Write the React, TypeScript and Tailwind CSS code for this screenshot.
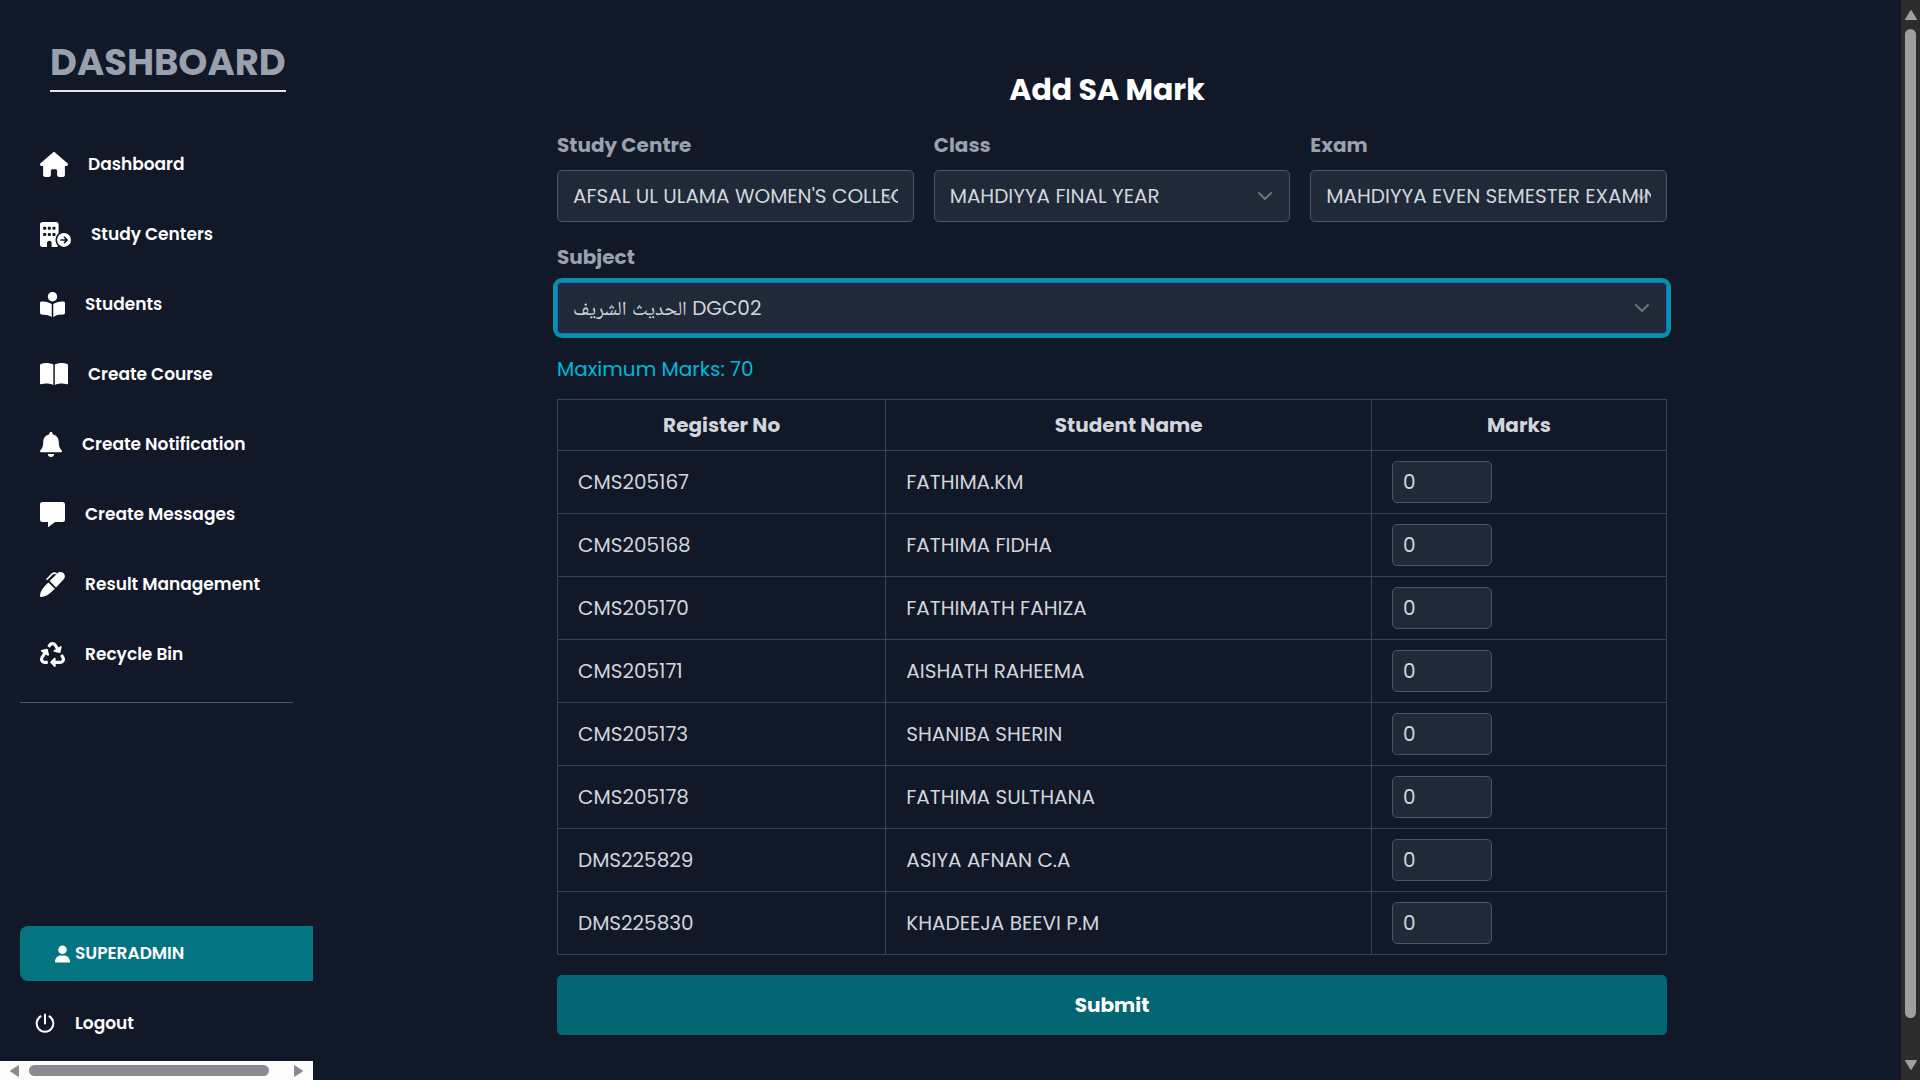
import React, { useState } from "react";
import {
  FaHouse,
  FaBuildingCircleArrowRight,
  FaBookOpenReader,
  FaUser,
} from "react-icons/fa6";
import { FaRecycle } from "react-icons/fa";

const navItems = [
  { label: "Dashboard", icon: <FaHouse className="h-[25px] w-7" /> },
  { label: "Study Centers", icon: <FaBuildingCircleArrowRight className="h-[25px] w-[31px]" /> },
  { label: "Students", icon: <FaBookOpenReader className="size-[25px]" /> },
  { label: "Create Course", icon: <OpenBookIcon /> },
  { label: "Create Notification", icon: <BellIcon /> },
  { label: "Create Messages", icon: <MessageIcon /> },
  { label: "Result Management", icon: <PenIcon /> },
  { label: "Recycle Bin", icon: <FaRecycle className="size-[25px]" /> },
];

const students = [
  { reg: "CMS205167", name: "FATHIMA.KM" },
  { reg: "CMS205168", name: "FATHIMA FIDHA" },
  { reg: "CMS205170", name: "FATHIMATH FAHIZA" },
  { reg: "CMS205171", name: "AISHATH RAHEEMA" },
  { reg: "CMS205173", name: "SHANIBA SHERIN" },
  { reg: "CMS205178", name: "FATHIMA SULTHANA" },
  { reg: "DMS225829", name: "ASIYA AFNAN C.A" },
  { reg: "DMS225830", name: "KHADEEJA BEEVI P.M" },
];

function OpenBookIcon() {
  return (
    <svg viewBox="0 0 28 22" className="h-[22px] w-7" fill="currentColor" aria-hidden="true">
      <path d="M13.300 1.600v20.400C10 20.400 5 20 1.200 21.300.5 21.500 0 21.100 0 20.500V2C0 1.500.3 1.100.8.900 4.500-.4 9.800-.2 13.300 1.600zM14.800 1.600v20.400c3.200-1.600 8.200-2 12-.7.7.2 1.200-.2 1.200-.8V2c0-.5-.3-.9-.8-1.100C23.500-.4 18.200-.2 14.800 1.600z" />
    </svg>
  );
}

function BellIcon() {
  return (
    <svg viewBox="0 0 22 25" className="h-[25px] w-[22px]" fill="currentColor" aria-hidden="true">
      <path d="M11 0c1 0 1.600.7 1.600 1.600v.6c3.700.8 6.200 3.900 6.200 7.800 0 4.400.9 6.300 2.600 8.100.4.4.6.8.6 1.200 0 .5-.4.900-1 .9H1c-.6 0-1-.4-1-.9 0-.4.2-.8.6-1.200C2.300 16.300 3.200 14.400 3.200 10c0-3.900 2.500-7 6.200-7.800v-.6C9.400.7 10 0 11 0zM7.900 21.900h6.200c0 1.700-1.400 3.100-3.100 3.100s-3.100-1.400-3.100-3.100z" />
    </svg>
  );
}

function MessageIcon() {
  return (
    <svg viewBox="0 0 25 25" className="size-[25px]" fill="currentColor" aria-hidden="true">
      <path d="M2.500 0h20A2.500 2.500 0 0 1 25 2.500v15a2.500 2.500 0 0 1-2.500 2.500H15l-6.200 4.800c-.4.300-.8.100-.8-.4V20H2.500A2.500 2.500 0 0 1 0 17.500v-15A2.500 2.500 0 0 1 2.500 0z" />
    </svg>
  );
}

function PenIcon() {
  return (
    <svg viewBox="0 0 25 25" className="size-[25px]" fill="currentColor" aria-hidden="true">
      <path d="M0 24.500C.2 19.500 1.500 17 8.400 10.400l6.400 6.400C8 23.500 5.500 24.800.5 25 .2 25 0 24.800 0 24.500z" />
      <path d="M9.700 9.100l7.500-7.600c2-1.900 4.700-1.900 6.400-.2 1.700 1.700 1.700 4.300-.1 6.200l-7.500 7.900z" />
      <path
        d="M7 7.200l5-5Q13.800.6 16 1.400"
        fill="none"
        stroke="currentColor"
        strokeWidth="1.600"
        strokeLinecap="round"
      />
    </svg>
  );
}

function PowerIcon() {
  return (
    <svg
      viewBox="0 0 20 20"
      className="size-5"
      fill="none"
      stroke="currentColor"
      strokeWidth="2"
      strokeLinecap="round"
      aria-hidden="true"
    >
      <path d="M10 1.500v9" />
      <path d="M5.500 3.400a8.300 8.300 0 1 0 9 0" />
    </svg>
  );
}

function SelectField({
  id,
  label,
  value,
  active = false,
}: {
  id: string;
  label: string;
  value: string;
  active?: boolean;
}) {
  return (
    <div className="min-w-0">
      <label htmlFor={id} className="mb-2.5 block text-[20px] leading-[30px] font-bold text-gray-400">
        {label}
      </label>
      <div className="relative rounded-[5px] bg-[#1f2937]">
        <svg
          viewBox="0 0 14 8"
          className="pointer-events-none absolute top-[22px] right-[18px] h-2 w-3.5"
          fill="none"
          stroke="#6b7280"
          strokeWidth="2"
          strokeLinecap="round"
          strokeLinejoin="round"
          aria-hidden="true"
        >
          <path d="M1 1l6 6 6-6" />
        </svg>
        <select
          id={id}
          className={
            active
              ? "relative block h-[52px] w-full appearance-none rounded-[5px] border border-[#1c64f2] bg-transparent px-[15px] text-[20px] text-gray-300 ring-4 ring-[#0694a2] outline-none"
              : "relative block h-[52px] w-full appearance-none rounded-[5px] border border-[#4b5563] bg-transparent px-[15px] text-[20px] text-gray-300 outline-none"
          }
        >
          <option>{value}</option>
        </select>
      </div>
    </div>
  );
}

function Sidebar() {
  return (
    <aside className="flex h-full w-[313px] shrink-0 flex-col text-[17px] leading-[27px] font-semibold text-white">
      <div className="flex min-h-0 flex-1 flex-col overflow-hidden pl-5">
        <h1 className="mt-10 ml-[30px] self-start border-b-2 border-gray-200 pb-1.5 text-[37px] leading-[44px] font-bold text-gray-400">
          DASHBOARD
        </h1>
        <nav className="mt-[37px]">
          <ul>
            {navItems.map((item) => (
              <li key={item.label}>
                <a href="#" className="flex h-[70px] items-center gap-5 pl-5">
                  {item.icon}
                  <span>{item.label}</span>
                </a>
              </li>
            ))}
          </ul>
        </nav>
        <hr className="mt-[13px] mr-5 border-gray-600" />
        <div className="mt-auto pb-2">
          <a href="#" className="flex h-[55px] items-center gap-[5px] rounded-l-lg bg-[#047481] pl-[35px]">
            <FaUser className="h-[18px] w-[15px]" />
            <span>SUPERADMIN</span>
          </a>
          <button type="button" className="mt-3 flex h-[60px] w-full items-center gap-5 pl-[15px]">
            <PowerIcon />
            <span>Logout</span>
          </button>
        </div>
      </div>
      <div className="flex h-[19px] shrink-0 items-center justify-between bg-[#fcfcfc] px-2.5" aria-hidden="true">
        <svg viewBox="0 0 9 12" className="h-3 w-[9px]" fill="#8a8b8d">
          <path d="M9 1v10q0 1-1 .6L.6 6.700q-.8-.7 0-1.400L8 .4Q9 0 9 1z" />
        </svg>
        <div className="mr-[25px] ml-2.5 h-[11px] flex-1 rounded-full bg-[#8a8b8d]" />
        <svg viewBox="0 0 9 12" className="h-3 w-[9px]" fill="#8a8b8d">
          <path d="M0 1v10q0 1 1 .6l7.400-4.900q.8-.7 0-1.400L1 .4Q0 0 0 1z" />
        </svg>
      </div>
    </aside>
  );
}

function PageScrollbar() {
  return (
    <div className="flex h-full w-[19px] shrink-0 flex-col items-center bg-[#2c2c2c] py-2.5" aria-hidden="true">
      <svg viewBox="0 0 12 10" className="h-2.5 w-3" fill="#9f9f9f">
        <path d="M1 10h10q1.300 0 .6-1.200L6.700.6Q6 0 5.300.6L.4 8.800Q-.3 10 1 10z" />
      </svg>
      <div className="mt-[9px] mb-[42px] w-[11px] flex-1 rounded-full bg-[#9f9f9f]" />
      <svg viewBox="0 0 12 10" className="h-2.5 w-3" fill="#9f9f9f">
        <path d="M1 0h10q1.300 0 .6 1.200L6.700 9.400Q6 10 5.300 9.400L.4 1.200Q-.3 0 1 0z" />
      </svg>
    </div>
  );
}

export default function App() {
  const [marks, setMarks] = useState<string[]>(students.map(() => "0"));

  return (
    <div className="flex h-screen overflow-hidden bg-[#111827] font-['Poppins','Inter','Times_New_Roman','Noto_Naskh_Arabic','Amiri','FreeSerif','Noto_Sans_Arabic','DejaVu_Sans',sans-serif]">
      <Sidebar />
      <main className="min-w-0 flex-1 pt-[67px]">
        <h2 className="text-center text-[30px] leading-[45px] font-bold text-white">Add SA Mark</h2>
        <form className="mt-[18px] ml-[244px] w-[69.9%]" onSubmit={(e) => e.preventDefault()}>
          <div className="grid grid-cols-3 gap-5">
            <SelectField id="centre" label="Study Centre" value="AFSAL UL ULAMA WOMEN'S COLLEGE" />
            <SelectField id="class" label="Class" value="MAHDIYYA FINAL YEAR" />
            <SelectField id="exam" label="Exam" value="MAHDIYYA EVEN SEMESTER EXAMINATION" />
          </div>
          <div className="mt-5">
            <SelectField id="subject" label="Subject" value="الحديث الشريف DGC02" active />
          </div>
          <p className="mt-5 text-[20px] leading-[30px] text-cyan-500">Maximum Marks: 70</p>
          <table className="mt-[15px] w-full table-fixed border-collapse text-[20px] leading-[30px] text-gray-300">
            <colgroup>
              <col className="w-[29.6%]" />
              <col className="w-[43.8%]" />
              <col className="w-[26.6%]" />
            </colgroup>
            <thead>
              <tr className="h-[51px] font-bold">
                <th className="border border-gray-700">Register No</th>
                <th className="border border-gray-700">Student Name</th>
                <th className="border border-gray-700">Marks</th>
              </tr>
            </thead>
            <tbody>
              {students.map((s, i) => (
                <tr key={s.reg} className="h-[63px]">
                  <td className="border border-gray-700 px-5">{s.reg}</td>
                  <td className="border border-gray-700 px-5">{s.name}</td>
                  <td className="border border-gray-700 px-5">
                    <input
                      type="text"
                      inputMode="numeric"
                      aria-label={`Marks for ${s.name}`}
                      value={marks[i]}
                      onChange={(e) => setMarks(marks.map((m, j) => (j === i ? e.target.value : m)))}
                      className="block h-[42px] w-[100px] rounded-[5px] border border-gray-600 bg-[#1f2937] px-2.5 outline-none"
                    />
                  </td>
                </tr>
              ))}
            </tbody>
          </table>
          <button
            type="submit"
            className="mt-5 h-[60px] w-full rounded-[5px] bg-[#036672] text-[20px] font-bold text-white"
          >
            Submit
          </button>
        </form>
      </main>
      <PageScrollbar />
    </div>
  );
}
